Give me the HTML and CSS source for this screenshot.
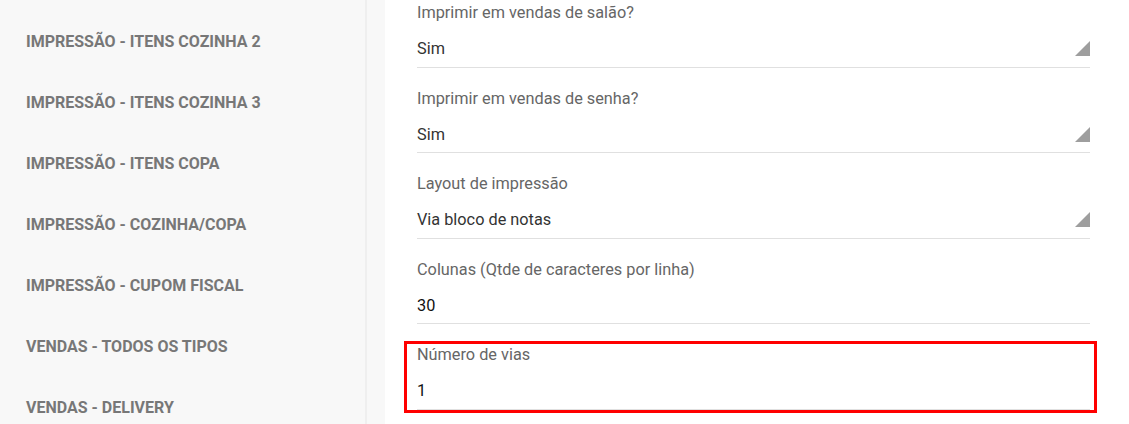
FILE: index.html
```html
<!DOCTYPE html>
<html lang="pt-BR">
<head>
    <meta charset="UTF-8">
    <meta name="viewport" content="width=device-width, initial-scale=1.0">
    <title>Configurações de impressão</title>
    <link rel="stylesheet" href="styles.css">
</head>
<body>
    <div class="page">
        <aside class="sidebar">
            <ul class="menu">
                <li>IMPRESSÃO - ITENS COZINHA 2</li>
                <li>IMPRESSÃO - ITENS COZINHA 3</li>
                <li>IMPRESSÃO - ITENS COPA</li>
                <li>IMPRESSÃO - COZINHA/COPA</li>
                <li>IMPRESSÃO - CUPOM FISCAL</li>
                <li>VENDAS - TODOS OS TIPOS</li>
                <li>VENDAS - DELIVERY</li>
            </ul>
        </aside>

        <main class="content">
            <div class="form">
                <div class="field">
                    <label>Imprimir em vendas de salão?</label>
                    <div class="value select">
                        <span>Sim</span>
                        <svg class="caret" width="15" height="15" viewBox="0 0 15 15"><polygon points="15,0 15,15 0,15" fill="#9e9e9e"/></svg>
                    </div>
                </div>
                <div class="field">
                    <label>Imprimir em vendas de senha?</label>
                    <div class="value select">
                        <span>Sim</span>
                        <svg class="caret" width="15" height="15" viewBox="0 0 15 15"><polygon points="15,0 15,15 0,15" fill="#9e9e9e"/></svg>
                    </div>
                </div>
                <div class="field">
                    <label>Layout de impressão</label>
                    <div class="value select">
                        <span>Via bloco de notas</span>
                        <svg class="caret" width="15" height="15" viewBox="0 0 15 15"><polygon points="15,0 15,15 0,15" fill="#9e9e9e"/></svg>
                    </div>
                </div>
                <div class="field">
                    <label>Colunas (Qtde de caracteres por linha)</label>
                    <div class="value input">30</div>
                </div>
                <div class="field highlighted">
                    <label>Número de vias</label>
                    <div class="value input">1</div>
                </div>
            </div>
        </main>
    </div>
</body>
</html>
```

FILE: styles.css
```css
html, body {
    margin: 0;
    padding: 0;
    height: 100%;
    overflow: hidden;
}

body {
    font-family: Roboto, 'Liberation Sans', Arial, sans-serif;
    background-color: #ffffff;
    color: #333;
}

.page {
    display: flex;
    height: 424px;
}

.sidebar {
    width: 365px;
    background-color: #f8f8f8;
    border-right: 2px solid #efefef;
    flex-shrink: 0;
}

.menu {
    list-style: none;
    margin: 0;
    padding: 11px 0 0 0;
}

.menu li {
    height: 61px;
    line-height: 61px;
    padding-left: 26px;
    font-size: 16px;
    font-weight: 700;
    color: #777777;
    white-space: nowrap;
}

.content {
    flex: 1;
    background-color: #f8f8f8;
    padding-left: 18px;
}

.form {
    background-color: #ffffff;
    height: calc(100% + 18px);
    padding: 0 39px 0 32px;
    margin-top: -18px;
}

.field {
    position: relative;
    padding: 21px 0 7.5px 0;
    border-bottom: 1px solid #e0e0e0;
}

.field label {
    display: block;
    font-size: 16.3px;
    line-height: 20px;
    color: #666666;
}

.value {
    margin-top: 16px;
    font-size: 16.3px;
    line-height: 20px;
}

.select {
    display: flex;
    justify-content: space-between;
    align-items: center;
    color: #333333;
}

.input {
    color: #111111;
}

.caret {
    display: block;
    margin-top: -1px;
}

.highlighted::after {
    content: "";
    position: absolute;
    top: 17px;
    left: -13px;
    right: -7px;
    bottom: -4px;
    border: 3px solid #ff0000;
}
```
